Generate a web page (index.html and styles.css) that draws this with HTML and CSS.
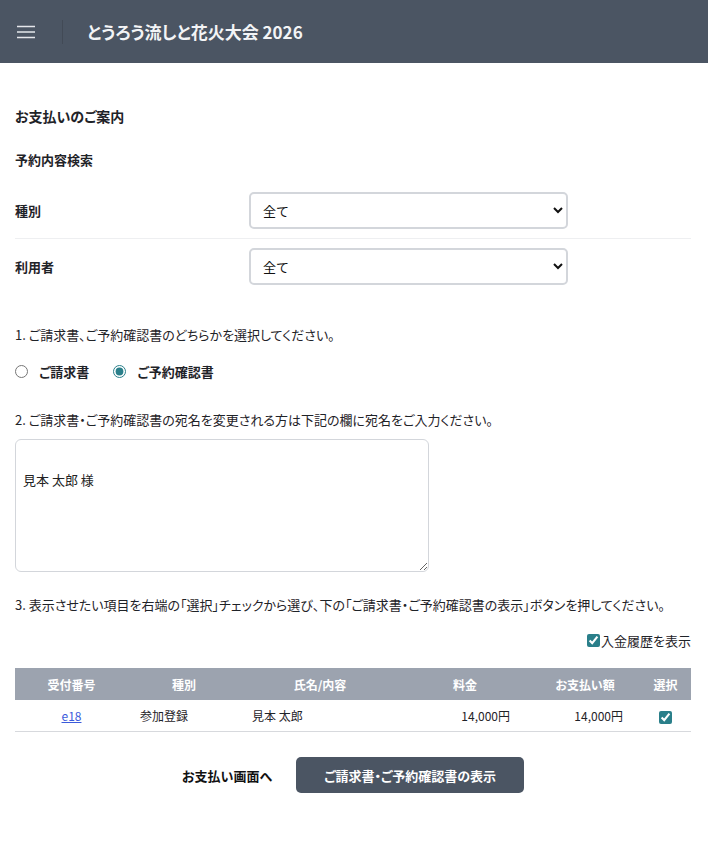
FILE: index.html
```html
<!DOCTYPE html>
<html lang="ja">
<head>
  <meta charset="UTF-8">
  <meta name="viewport" content="width=device-width, initial-scale=1.0">
  <title>お支払いのご案内 | とうろう流しと花火大会 2026</title>
  <link rel="stylesheet" href="styles.css">
</head>
<body>
  <header class="app-header">
    <button class="menu-btn" type="button" aria-label="メニュー">
      <svg width="18" height="14" viewBox="0 0 18 14">
        <path d="M0 1.5h18M0 7h18M0 12.5h18" stroke="#e5e7eb" stroke-width="1.6" fill="none"/>
      </svg>
    </button>
    <h1 class="app-title">とうろう流しと花火大会 2026</h1>
  </header>

  <main class="container">
    <h2 class="page-title">お支払いのご案内</h2>

    <section class="search">
      <h3 class="section-title">予約内容検索</h3>
      <div class="form-row">
        <label class="form-label" for="kind">種別</label>
        <select id="kind" class="form-select">
          <option>全て</option>
        </select>
      </div>
      <div class="form-row">
        <label class="form-label" for="user">利用者</label>
        <select id="user" class="form-select">
          <option>全て</option>
        </select>
      </div>
    </section>

    <p class="step">1. ご請求書、ご予約確認書のどちらかを選択してください。</p>
    <div class="radio-group">
      <label class="radio"><input type="radio" name="doc"> ご請求書</label>
      <label class="radio"><input type="radio" name="doc" checked> ご予約確認書</label>
    </div>

    <p class="step">2. ご請求書・ご予約確認書の宛名を変更される方は下記の欄に宛名をご入力ください。</p>
    <textarea class="address-box">

見本 太郎 様</textarea>

    <p class="step">3. 表示させたい項目を右端の「選択」チェックから選び、下の「ご請求書・ご予約確認書の表示」ボタンを押してください。</p>
    <div class="history-toggle">
      <label class="check"><input type="checkbox" checked>入金履歴を表示</label>
    </div>

    <table class="pay-table">
      <colgroup>
        <col style="width:113px">
        <col style="width:112px">
        <col style="width:160px">
        <col style="width:130px">
        <col style="width:110px">
        <col style="width:51px">
      </colgroup>
      <thead>
        <tr>
          <th>受付番号</th>
          <th>種別</th>
          <th>氏名/内容</th>
          <th>料金</th>
          <th>お支払い額</th>
          <th>選択</th>
        </tr>
      </thead>
      <tbody>
        <tr>
          <td class="center"><a href="#">e18</a></td>
          <td>参加登録</td>
          <td>見本 太郎</td>
          <td class="num">14,000円</td>
          <td class="num">14,000円</td>
          <td class="center"><input type="checkbox" checked></td>
        </tr>
      </tbody>
    </table>

    <div class="actions">
      <a class="btn-link" href="#">お支払い画面へ</a>
      <button class="btn-primary" type="button">ご請求書・ご予約確認書の表示</button>
    </div>
  </main>
</body>
</html>
```

FILE: styles.css
```css
body {
  margin: 0;
  font-family: "Noto Sans CJK JP", "Noto Sans", sans-serif;
  font-feature-settings: "palt";
  font-size: 13px;
  color: #1f2328;
  background: #fff;
}

/* ヘッダー */
.app-header {
  height: 63px;
  background: #4b5563;
  display: flex;
  align-items: center;
}

.menu-btn {
  width: 63px;
  height: 24px;
  padding: 0 0 0 17px;
  border: 0;
  border-right: 1px solid #424a56;
  background: none;
  display: flex;
  align-items: center;
}

.app-title {
  margin: 0 0 0 24px;
  font-size: 17px;
  font-weight: bold;
  color: #f3f4f6;
}

/* 本文 */
.container {
  padding: 43px 17px 40px 15px;
}

.page-title {
  margin: 0 0 24px;
  font-size: 14px;
  font-weight: bold;
}

.section-title {
  margin: 0 0 14px;
  font-size: 13px;
  font-weight: bold;
}

.form-row {
  display: flex;
  align-items: center;
  padding: 9px 0;
  border-bottom: 1px solid #eeeff1;
}

.form-row:last-child {
  border-bottom: 0;
}

.form-label {
  width: 234px;
  font-weight: bold;
}

.form-select {
  width: 319px;
  height: 37px;
  padding: 0 8px;
  border: 2px solid #d3d6db;
  border-radius: 5px;
  background: #fff;
  font-family: inherit;
  font-size: 13px;
  color: #111;
}

.step {
  margin: 0;
  line-height: 20px;
}

.search + .step {
  margin-top: 31px;
}

.radio-group {
  display: flex;
  gap: 24px;
  margin: 17px 0 29px;
}

.radio {
  display: flex;
  align-items: center;
  gap: 11px;
  font-weight: bold;
}

.radio input {
  margin: 0;
  width: 13px;
  height: 13px;
  accent-color: #2a7f8a;
}

.address-box {
  display: block;
  box-sizing: border-box;
  width: 414px;
  height: 133px;
  margin: 9px 0 23px;
  padding: 10px 7px;
  border: 1px solid #d3d6db;
  border-radius: 6px;
  font-family: inherit;
  font-size: 13px;
  line-height: 20px;
  color: #222;
  resize: vertical;
}

.history-toggle {
  display: flex;
  justify-content: flex-end;
  margin: 16px 0 18px;
}

.check {
  display: flex;
  align-items: center;
}

.check input {
  margin: 0 1px 0 0;
  width: 13px;
  height: 13px;
  accent-color: #2a7f8a;
}

/* 一覧テーブル */
.pay-table {
  width: 100%;
  table-layout: fixed;
  border-collapse: collapse;
  font-size: 12px;
}

.pay-table th {
  height: 32px;
  padding: 0;
  background: #9ca3af;
  color: #fff;
  font-weight: bold;
  text-align: center;
}

.pay-table td {
  height: 31px;
  padding: 0 12px;
  border-bottom: 1px solid #d7d9dd;
}

.pay-table td.center {
  text-align: center;
  padding: 0;
}

.pay-table td.num {
  text-align: right;
  padding-right: 20px;
}

.pay-table td.num + td.num {
  padding-right: 17px;
}

.pay-table a {
  color: #3b5bdb;
}

.pay-table td input {
  margin: 0;
  width: 13px;
  height: 13px;
  accent-color: #2a7f8a;
  vertical-align: middle;
}

/* ボタン */
.actions {
  display: flex;
  justify-content: center;
  align-items: center;
  gap: 24px;
  margin-top: 25px;
}

.btn-link {
  font-weight: bold;
  color: #111;
  text-decoration: none;
}

.btn-primary {
  height: 36px;
  padding: 0 28px;
  border: 0;
  border-radius: 5px;
  background: #4b5563;
  color: #fff;
  font-family: inherit;
  font-size: 13px;
  font-weight: bold;
  font-feature-settings: "palt";
}
```
